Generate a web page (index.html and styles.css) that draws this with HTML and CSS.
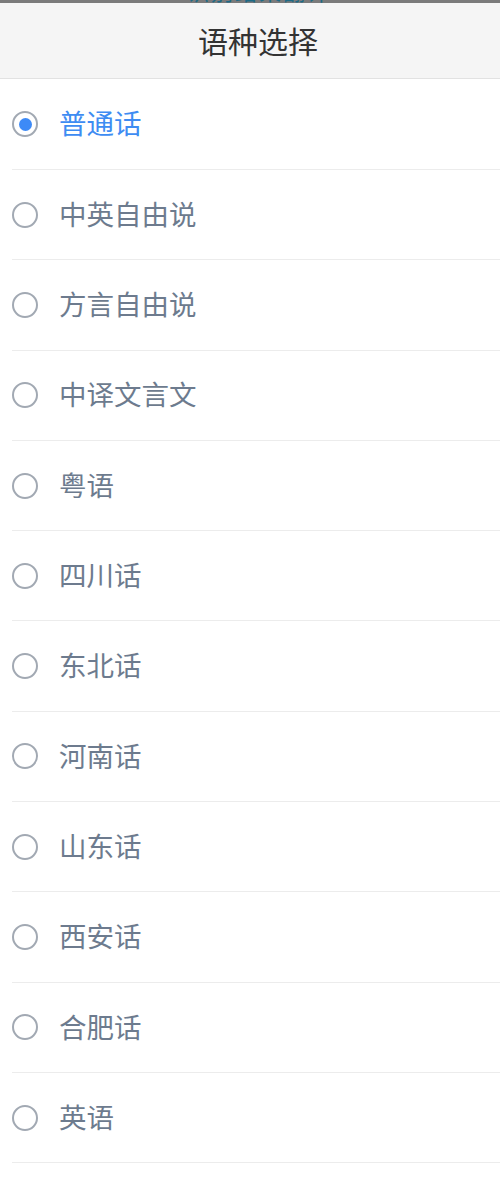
FILE: index.html
```html
<!DOCTYPE html>
<html lang="zh">
<head>
<meta charset="utf-8">
<link rel="stylesheet" href="styles.css">
</head>
<body>
<div class="topstrip"><span class="topstrip-text">识别结果翻译</span></div>
<header class="header">语种选择</header>
<ul class="list">
  <li class="row selected"><span class="radio"></span><span class="label">普通话</span></li>
  <li class="row"><span class="radio"></span><span class="label">中英自由说</span></li>
  <li class="row"><span class="radio"></span><span class="label">方言自由说</span></li>
  <li class="row"><span class="radio"></span><span class="label">中译文言文</span></li>
  <li class="row"><span class="radio"></span><span class="label">粤语</span></li>
  <li class="row"><span class="radio"></span><span class="label">四川话</span></li>
  <li class="row"><span class="radio"></span><span class="label">东北话</span></li>
  <li class="row"><span class="radio"></span><span class="label">河南话</span></li>
  <li class="row"><span class="radio"></span><span class="label">山东话</span></li>
  <li class="row"><span class="radio"></span><span class="label">西安话</span></li>
  <li class="row"><span class="radio"></span><span class="label">合肥话</span></li>
  <li class="row"><span class="radio"></span><span class="label">英语</span></li>
</ul>
</body>
</html>
```
FILE: styles.css
```css
* { box-sizing: border-box; }
html, body {
  margin: 0;
  padding: 0;
  background: #ffffff;
  font-family: "Noto Sans CJK SC", "Noto Sans", sans-serif;
}
.topstrip {
  height: 3px;
  background: #7b7b7b;
  overflow: hidden;
  display: flex;
  justify-content: center;
  padding-left: 18px;
}
.topstrip-text {
  display: block;
  margin-top: -22px;
  font-size: 22px;
  line-height: 24px;
  color: #1d6a86;
  letter-spacing: 2px;
}
.header {
  height: 76px;
  background: #f5f5f5;
  border-bottom: 1px solid #e2e2e2;
  display: flex;
  align-items: center;
  justify-content: center;
  font-size: 30px;
  line-height: 1;
  color: #333333;
  padding-bottom: 1px;
  padding-left: 16px;
}
.list {
  list-style: none;
  margin: 0;
  padding: 0 0 0 12px;
}
.row {
  height: 90.3px;
  border-bottom: 1px solid #ececec;
  display: flex;
  align-items: center;
  gap: 21px;
}
.row:first-child {
  height: 91px;
}
.radio {
  width: 26px;
  height: 26px;
  border-radius: 50%;
  border: 2px solid #a2a9b3;
  display: flex;
  align-items: center;
  justify-content: center;
  flex: none;
}
.label {
  font-size: 27.5px;
  color: #6d7b8e;
  line-height: 1;
  padding-bottom: 2px;
}
.selected .label {
  color: #3e8cf2;
}
.selected .radio::after {
  content: "";
  width: 13px;
  height: 13px;
  border-radius: 50%;
  background: #3d8af7;
}
```
